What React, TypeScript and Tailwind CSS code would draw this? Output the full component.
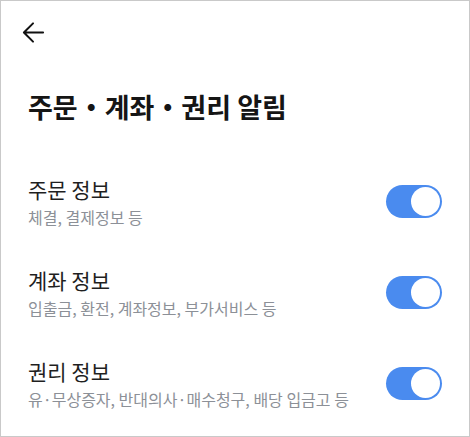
const items = [
  { title: "주문 정보", desc: "체결, 결제정보 등" },
  { title: "계좌 정보", desc: "입출금, 환전, 계좌정보, 부가서비스 등" },
  { title: "권리 정보", desc: "유·무상증자, 반대의사·매수청구, 배당 입금고 등" },
];

function Toggle() {
  return (
    <div className="w-[56px] h-[33px] rounded-full bg-[#4a8bef] p-[2px] flex justify-end">
      <div className="w-[29px] h-[29px] rounded-full bg-white" />
    </div>
  );
}

export default function App() {
  return (
    <div
      className="w-[470px] h-[437px] bg-white border border-[#c9c9c9] overflow-hidden"
      style={{ fontFamily: '"Noto Sans CJK KR", "Noto Sans", sans-serif' }}
    >
      {/* Header */}
      <div className="h-[62px] pl-[21px] flex items-center">
        <svg width="23" height="23" viewBox="0 0 24 24" fill="none" stroke="#111" strokeWidth={2.1} strokeLinecap="round" strokeLinejoin="round">
          <path d="M22 12H2.5M11.5 2.5L2 12l9.5 9.5" />
        </svg>
      </div>

      <h1 className="pl-[27px] mt-[26px] text-[27px] leading-[36px] font-bold text-[#151515]">
        주문・계좌・권리 알림
      </h1>

      <div className="mt-[31px]">
        {items.map((it) => (
          <div key={it.title} className="flex items-center justify-between px-[27px] h-[91px]">
            <div>
              <div className="text-[21px] leading-[27px] text-[#1f1f1f]">{it.title}</div>
              <div className="mt-[4px] text-[16px] leading-[21px] text-[#8c9097]">{it.desc}</div>
            </div>
            <Toggle />
          </div>
        ))}
      </div>
    </div>
  );
}
